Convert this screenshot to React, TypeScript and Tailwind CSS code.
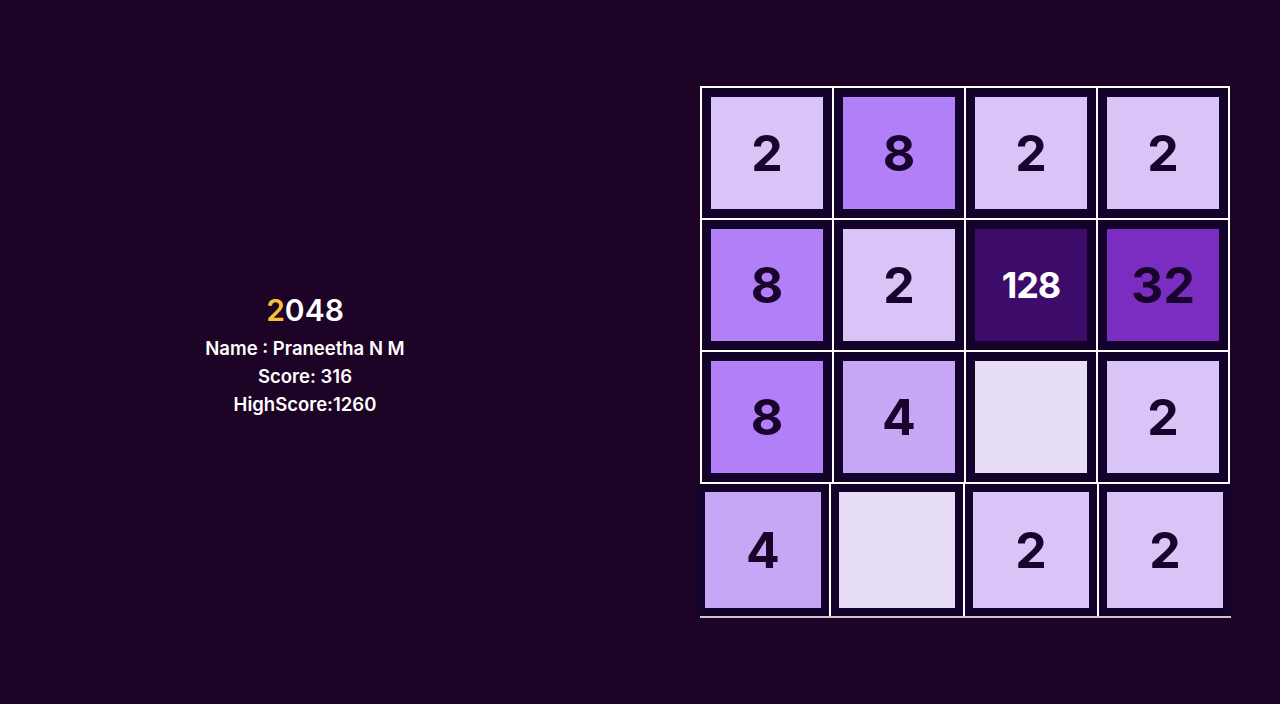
import React from "react";

type Tile = number | null;

const board: Tile[][] = [
  [2, 8, 2, 2],
  [8, 2, 128, 32],
  [8, 4, null, 2],
];

const lastRow: Tile[] = [4, null, 2, 2];

function tileClass(v: Tile) {
  switch (v) {
    case 2:
      return "bg-[#d9c4f7] text-[#17032b] text-[50px]";
    case 4:
      return "bg-[#c7a7f5] text-[#17032b] text-[50px]";
    case 8:
      return "bg-[#b180f8] text-[#17032b] text-[50px]";
    case 32:
      return "bg-[#7c2dc1] text-[#17032b] text-[50px]";
    case 128:
      return "bg-[#3d0b6a] text-white text-[36px] tracking-[-1px]";
    default:
      return "bg-[#e6dcf5]";
  }
}

function Cell({ value, size }: { value: Tile; size: string }) {
  return (
    <div className={`${size} border-[#13022a] flex items-center justify-center font-bold ${tileClass(value)}`}>
      {value ?? ""}
    </div>
  );
}

export default function App() {
  return (
    <div
      className="h-[704px] bg-[#1d0326] flex items-center overflow-hidden"
      style={{ fontFamily: "Inter, 'Open Sans', sans-serif" }}
    >
      {/* --- INFO --- */}
      <div className="w-[610px] pt-[6px] flex flex-col items-center text-white">
        <h1 className="text-[30px] leading-[36px] font-semibold">
          <span className="text-[#f9bf38]">2</span>048
        </h1>
        <div className="mt-[6px] text-[18.5px] leading-[28px] font-semibold text-center">
          <p>Name : Praneetha N M</p>
          <p>Score: 316</p>
          <p>HighScore:1260</p>
        </div>
      </div>

      {/* --- BOARD --- */}
      <div className="ml-[90px] flex flex-col">
        <div className="w-[530px] grid grid-cols-4 gap-[2px] bg-white border-2 border-white">
          {board.flat().map((v, i) => (
            <Cell key={i} value={v} size="h-[130px] border-[9px]" />
          ))}
        </div>
        <div className="flex -ml-[3px] w-[534px]">
          {lastRow.map((v, i) => (
            <div key={i} className={i > 0 ? "border-l-2 border-white" : ""}>
              <Cell value={v} size="w-[132px] h-[132px] border-[8px]" />
            </div>
          ))}
        </div>
        <div className="h-[2px] w-[531px] bg-[#c9c6cc]" />
      </div>
    </div>
  );
}
